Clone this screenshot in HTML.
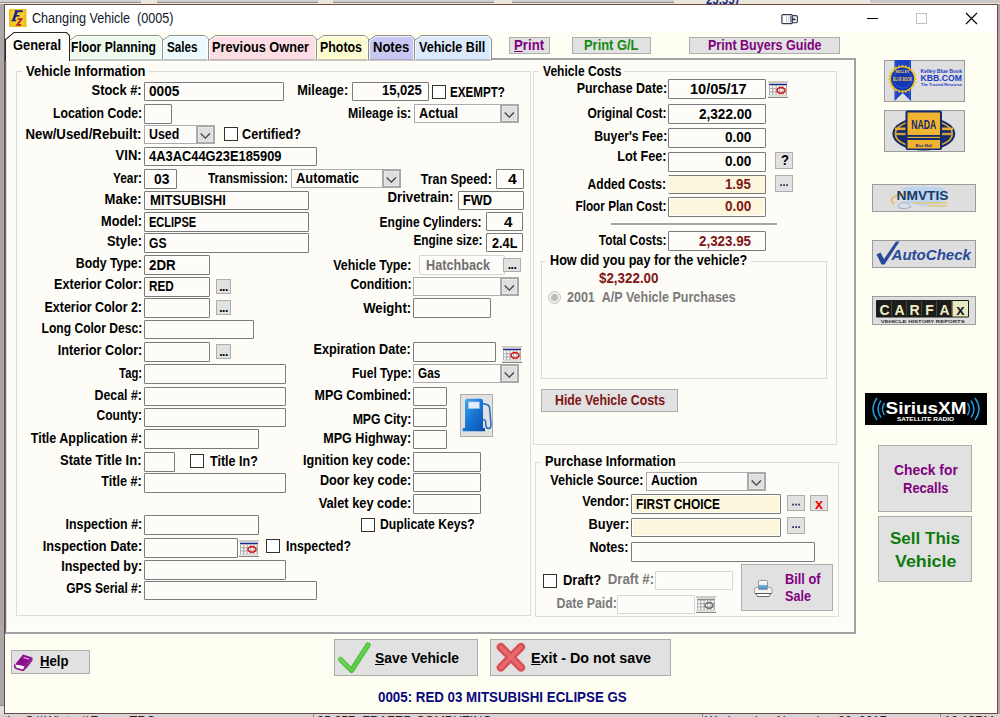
<!DOCTYPE html><html><head><meta charset="utf-8"><style>
:root{--pbg:#FDFCF7;--wbg:#FFFEF3}
html,body{margin:0;padding:0;width:1000px;height:717px;overflow:hidden;background:#A8A8A8;font-family:"Liberation Sans",sans-serif}
.t{position:absolute;white-space:nowrap;line-height:1;}
.b{position:absolute}
.inp{position:absolute;border:1px solid #7A7A7A;border-radius:1px}
.combo{position:absolute;box-sizing:border-box;border:1px solid #ABABAB;background:#FDFCF8;box-shadow:inset 0 0 0 1px #fff}
.cbtn{position:absolute;box-sizing:border-box;background:#DEDEDE;border:2px solid #A9A9A9;box-shadow:inset 0 0 0 1px #E9E9E9}
.chk{position:absolute;border:1px solid #333;background:#FFF}
.btn{position:absolute;background:#E1E1E1;border:1px solid #ADADAD}
.grp{position:absolute;border:1px solid #DCDCDC}
u{text-decoration:underline}
</style></head><body>
<div class="b" style="left:0px;top:0px;width:1000px;height:4px;background:#E9E8DA;border:none;"></div>
<div class="b" style="left:0px;top:0px;width:141px;height:2px;background:#CFCFCF;border:none;border-bottom:1px solid #8E8E8E"></div>
<div class="b" style="left:157px;top:0px;width:161px;height:2px;background:#CFCFCF;border:none;border-bottom:1px solid #8E8E8E"></div>
<div class="b" style="left:333px;top:0px;width:161px;height:2px;background:#CFCFCF;border:none;border-bottom:1px solid #8E8E8E"></div>
<div class="b" style="left:512px;top:0px;width:162px;height:2px;background:#CFCFCF;border:none;border-bottom:1px solid #8E8E8E"></div>
<div class="b" style="left:870px;top:0px;width:130px;height:3px;background:#C8C8C8;border:none;"></div>
<div class="t" style="left:706px;top:-6px;font-size:12.5px;color:#1A2A8A;font-weight:bold;transform:scaleX(0.910);transform-origin:left;">25,557</div>
<div class="b" style="left:4px;top:4px;width:992px;height:708px;border:1px solid #74483E;background:var(--wbg);box-shadow:inset 0 0 0 1px #fff"></div>
<div class="b" style="left:5px;top:5px;width:992px;height:27px;background:#FFFFFF;border:none;"></div>
<svg class="b" style="left:9px;top:9px" width="18" height="18" viewBox="0 0 18 18">
<rect x="0" y="0" width="17.5" height="18" fill="#F2C011"/>
<rect x="2" y="1.5" width="13" height="15" fill="#F8D84A" opacity="0.5"/>
<g stroke="#1A2490" stroke-linecap="butt" fill="none">
<path d="M4.3 11.6 L7.6 2.3" stroke-width="2.6"/>
<path d="M5.8 2.2 H13.8" stroke-width="2"/>
<path d="M5.6 6.8 H10.4" stroke-width="1.6"/>
<path d="M2.4 11.6 H7.2" stroke-width="1.4"/>
</g>
<g stroke="#B01830" fill="none">
<path d="M8.6 10 H12.6 L8.2 15.8 H12.2" stroke-width="1.7"/>
</g>
</svg>
<div class="t" style="left:31.5px;top:11px;font-size:14px;color:#101828;font-weight:normal;transform:scaleX(0.900);transform-origin:left;">Changing Vehicle&nbsp;&nbsp;(0005)</div>
<svg class="b" style="left:781px;top:14px" width="18" height="11" viewBox="0 0 18 11">
<rect x="9.6" y="1.6" width="6.8" height="7.2" rx="1.2" fill="#EEEEF2" stroke="#353A50" stroke-width="1.1"/>
<rect x="0.9" y="0.6" width="10.4" height="9" rx="1" fill="#FFFFFF" stroke="#353A50" stroke-width="1.2"/>
<path d="M5.5 2 V8.4 M7.8 2 V8.4" stroke="#B8BAC8" stroke-width="0.8"/>
<path d="M9.9 2 V8.4" stroke="#353A50" stroke-width="1"/>
<ellipse cx="13" cy="5.3" rx="1.7" ry="0.9" fill="#1A1E3A"/>
</svg>
<div class="b" style="left:867px;top:18px;width:11px;height:1px;background:#000;border:none;"></div>
<div class="b" style="left:916px;top:13px;width:11px;height:11px;background:transparent;border:1px solid #C0C0C0;box-sizing:border-box"></div>
<svg class="b" style="left:965px;top:12px" width="13" height="13"><path d="M1 1L12 12M12 1L1 12" stroke="#000" stroke-width="1.1"/></svg>
<div class="b" style="left:5px;top:57px;width:852px;height:1px;background:#FFFFFF;border:none;"></div>
<div class="b" style="left:856px;top:57px;width:1px;height:578px;background:#FFFFFF;border:none;"></div>
<div class="b" style="left:5px;top:634px;width:852px;height:1px;background:#FFFFFF;border:none;"></div>
<div class="b" style="left:5px;top:58px;width:851px;height:576px;box-sizing:border-box;background:var(--pbg);border-top:2px solid #A2A2A2;border-right:2px solid #A2A2A2;border-bottom:2px solid #A2A2A2;border-left:1px solid #7F6A64"></div>
<div class="b" style="left:6px;top:60px;width:1px;height:572px;background:#D6D6D6;border:none;"></div>
<div class="b" style="left:7px;top:60px;width:1px;height:572px;background:#FFFFFF;border:none;"></div>
<div class="b" style="left:6px;top:60px;width:848px;height:1px;background:#FFFFFF;border:none;"></div>
<div class="b" style="left:853px;top:60px;width:1px;height:572px;background:#FFFFFF;border:none;"></div>
<div class="b" style="left:6px;top:631px;width:848px;height:1px;background:#FFFFFF;border:none;"></div>
<svg class="b" style="left:0;top:30px" width="500" height="31" viewBox="0 30 500 31"><path d="M69.5 60 V40.5 L76.5 35.5 H159 L162.5 39 V60 Z" fill="#EEFAEE" stroke="#8E8E8E" stroke-width="1"/><path d="M70.5 60 V41 L76.8 36.5 H158.6 L161.5 39.4 V60" fill="none" stroke="#FFFFFF" stroke-width="1" opacity="0.8"/><path d="M162.5 60 V40.5 L169.5 35.5 H205 L208.5 39 V60 Z" fill="#ECF9FD" stroke="#8E8E8E" stroke-width="1"/><path d="M163.5 60 V41 L169.8 36.5 H204.6 L207.5 39.4 V60" fill="none" stroke="#FFFFFF" stroke-width="1" opacity="0.8"/><path d="M208.5 60 V40.5 L215.5 35.5 H313 L316.5 39 V60 Z" fill="#FCDDE3" stroke="#8E8E8E" stroke-width="1"/><path d="M209.5 60 V41 L215.8 36.5 H312.6 L315.5 39.4 V60" fill="none" stroke="#FFFFFF" stroke-width="1" opacity="0.8"/><path d="M316.5 60 V40.5 L323.5 35.5 H365 L368.5 39 V60 Z" fill="#FDFCD0" stroke="#8E8E8E" stroke-width="1"/><path d="M317.5 60 V41 L323.8 36.5 H364.6 L367.5 39.4 V60" fill="none" stroke="#FFFFFF" stroke-width="1" opacity="0.8"/><path d="M368.5 60 V40.5 L375.5 35.5 H411 L414.5 39 V60 Z" fill="#C8C6F2" stroke="#8E8E8E" stroke-width="1"/><path d="M369.5 60 V41 L375.8 36.5 H410.6 L413.5 39.4 V60" fill="none" stroke="#FFFFFF" stroke-width="1" opacity="0.8"/><path d="M414.5 60 V40.5 L421.5 35.5 H488 L491.5 39 V60 Z" fill="#DBEAFA" stroke="#8E8E8E" stroke-width="1"/><path d="M415.5 60 V41 L421.8 36.5 H487.6 L490.5 39.4 V60" fill="none" stroke="#FFFFFF" stroke-width="1" opacity="0.8"/><path d="M5.5 61 V39.5 L14 32.5 H66.5 L69.5 35.5 V61" fill="#FCFBF6" stroke="#262626" stroke-width="1.1"/><path d="M6.6 61 V40 L14.4 33.6 H66 L68.4 36 V61" fill="none" stroke="#FFFFFF" stroke-width="1"/></svg>
<div class="b" style="left:7px;top:58px;width:61px;height:3px;background:var(--pbg);border:none;"></div>
<div class="t" style="left:12.5px;top:38px;font-size:14.3px;color:#000;font-weight:bold;transform:scaleX(0.901);transform-origin:left;">General</div>
<div class="t" style="left:71px;top:40px;font-size:14.3px;color:#000;font-weight:bold;transform:scaleX(0.849);transform-origin:left;">Floor Planning</div>
<div class="t" style="left:167px;top:40px;font-size:14.3px;color:#000;font-weight:bold;transform:scaleX(0.819);transform-origin:left;">Sales</div>
<div class="t" style="left:212.4px;top:40px;font-size:14.3px;color:#000;font-weight:bold;transform:scaleX(0.891);transform-origin:left;">Previous Owner</div>
<div class="t" style="left:320px;top:40px;font-size:14.3px;color:#000;font-weight:bold;transform:scaleX(0.867);transform-origin:left;">Photos</div>
<div class="t" style="left:372.5px;top:40px;font-size:14.3px;color:#000;font-weight:bold;transform:scaleX(0.911);transform-origin:left;">Notes</div>
<div class="t" style="left:419px;top:40px;font-size:14.3px;color:#000;font-weight:bold;transform:scaleX(0.879);transform-origin:left;">Vehicle Bill</div>
<div class="btn" style="left:509px;top:37px;width:39px;height:15px;"></div>
<div class="t" style="left:514.4px;top:38px;font-size:14.3px;color:#800080;font-weight:bold;transform:scaleX(0.927);transform-origin:left;"><u>P</u>rint</div>
<div class="btn" style="left:572px;top:37px;width:77px;height:15px;"></div>
<div class="t" style="left:584px;top:38px;font-size:14.3px;color:#138A13;font-weight:bold;transform:scaleX(0.903);transform-origin:left;">Print G/L</div>
<div class="btn" style="left:689px;top:37px;width:149px;height:15px;"></div>
<div class="t" style="left:708px;top:38px;font-size:14.3px;color:#800080;font-weight:bold;transform:scaleX(0.877);transform-origin:left;">Print Buyers Guide</div>
<div class="grp" style="left:16px;top:71px;width:513px;height:543px"></div>
<div class="b" style="left:21.5px;top:69px;width:126.5px;height:5px;background:var(--pbg);border:none;"></div>
<div class="t" style="left:25.5px;top:64px;font-size:14.3px;color:#000;font-weight:bold;transform:scaleX(0.906);transform-origin:left;">Vehicle Information</div>
<div class="t" style="right:858px;top:83px;font-size:14.3px;color:#000;font-weight:bold;transform:scaleX(0.899);transform-origin:right;">Stock #:</div>
<div class="t" style="right:858px;top:106px;font-size:14.3px;color:#000;font-weight:bold;transform:scaleX(0.855);transform-origin:right;">Location Code:</div>
<div class="t" style="right:858px;top:127px;font-size:14.3px;color:#000;font-weight:bold;transform:scaleX(0.924);transform-origin:right;">New/Used/Rebuilt:</div>
<div class="t" style="right:858px;top:148px;font-size:14.3px;color:#000;font-weight:bold;transform:scaleX(0.909);transform-origin:right;">VIN:</div>
<div class="t" style="right:858px;top:171px;font-size:14.3px;color:#000;font-weight:bold;transform:scaleX(0.829);transform-origin:right;">Year:</div>
<div class="t" style="right:858px;top:192px;font-size:14.3px;color:#000;font-weight:bold;transform:scaleX(0.913);transform-origin:right;">Make:</div>
<div class="t" style="right:858px;top:214px;font-size:14.3px;color:#000;font-weight:bold;transform:scaleX(0.890);transform-origin:right;">Model:</div>
<div class="t" style="right:858px;top:234px;font-size:14.3px;color:#000;font-weight:bold;transform:scaleX(0.899);transform-origin:right;">Style:</div>
<div class="t" style="right:858px;top:256px;font-size:14.3px;color:#000;font-weight:bold;transform:scaleX(0.859);transform-origin:right;">Body Type:</div>
<div class="t" style="right:858px;top:277px;font-size:14.3px;color:#000;font-weight:bold;transform:scaleX(0.879);transform-origin:right;">Exterior Color:</div>
<div class="t" style="right:858px;top:300px;font-size:14.3px;color:#000;font-weight:bold;transform:scaleX(0.870);transform-origin:right;">Exterior Color 2:</div>
<div class="t" style="right:858px;top:321px;font-size:14.3px;color:#000;font-weight:bold;transform:scaleX(0.844);transform-origin:right;">Long Color Desc:</div>
<div class="t" style="right:858px;top:343px;font-size:14.3px;color:#000;font-weight:bold;transform:scaleX(0.887);transform-origin:right;">Interior Color:</div>
<div class="t" style="right:858px;top:366px;font-size:14.3px;color:#000;font-weight:bold;transform:scaleX(0.790);transform-origin:right;">Tag:</div>
<div class="t" style="right:858px;top:388px;font-size:14.3px;color:#000;font-weight:bold;transform:scaleX(0.862);transform-origin:right;">Decal #:</div>
<div class="t" style="right:858px;top:408px;font-size:14.3px;color:#000;font-weight:bold;transform:scaleX(0.841);transform-origin:right;">County:</div>
<div class="t" style="right:858px;top:431px;font-size:14.3px;color:#000;font-weight:bold;transform:scaleX(0.876);transform-origin:right;">Title Application #:</div>
<div class="t" style="right:858px;top:453px;font-size:14.3px;color:#000;font-weight:bold;transform:scaleX(0.910);transform-origin:right;">State Title In:</div>
<div class="t" style="right:858px;top:474px;font-size:14.3px;color:#000;font-weight:bold;transform:scaleX(0.884);transform-origin:right;">Title #:</div>
<div class="t" style="right:858px;top:517px;font-size:14.3px;color:#000;font-weight:bold;transform:scaleX(0.869);transform-origin:right;">Inspection #:</div>
<div class="t" style="right:858px;top:539px;font-size:14.3px;color:#000;font-weight:bold;transform:scaleX(0.895);transform-origin:right;">Inspection Date:</div>
<div class="t" style="right:858px;top:559px;font-size:14.3px;color:#000;font-weight:bold;transform:scaleX(0.879);transform-origin:right;">Inspected by:</div>
<div class="t" style="right:858px;top:581px;font-size:14.3px;color:#000;font-weight:bold;transform:scaleX(0.842);transform-origin:right;">GPS Serial #:</div>
<div class="inp" style="left:144px;top:82px;width:138px;height:17px;border-color:#7A7A7A;background:#FDFCF8;box-shadow:inset 0 0 0 1px #FFF;"></div>
<div class="t" style="left:149px;top:84px;font-size:14.3px;color:#000;font-weight:bold;transform:scaleX(0.956);transform-origin:left;">0005</div>
<div class="inp" style="left:144px;top:104px;width:26px;height:18px;border-color:#7A7A7A;background:#FDFCF8;box-shadow:inset 0 0 0 1px #FFF;"></div>
<div class="combo" style="left:144px;top:125px;width:71px;height:19px"></div>
<div class="cbtn" style="left:196px;top:125px;width:19px;height:19px"><svg width="19" height="19" style="position:absolute;left:-2px;top:-2px"><path d="M4.7 8.5 L9.3 13.1 L13.9 8.5" stroke="#404040" stroke-width="1.3" fill="none"/></svg></div>
<div class="t" style="left:149px;top:127px;font-size:14.3px;color:#000;font-weight:bold;transform:scaleX(0.864);transform-origin:left;">Used</div>
<div class="chk" style="left:224px;top:127px;width:12px;height:12px"></div>
<div class="t" style="left:242.4px;top:127px;font-size:14.3px;color:#000;font-weight:bold;transform:scaleX(0.884);transform-origin:left;">Certified?</div>
<div class="inp" style="left:144px;top:147px;width:171px;height:17px;border-color:#7A7A7A;background:#FDFCF8;box-shadow:inset 0 0 0 1px #FFF;"></div>
<div class="t" style="left:149.4px;top:149px;font-size:14.3px;color:#000;font-weight:bold;transform:scaleX(0.901);transform-origin:left;">4A3AC44G23E185909</div>
<div class="inp" style="left:144px;top:169px;width:31px;height:18px;border-color:#7A7A7A;background:#FDFCF8;box-shadow:inset 0 0 0 1px #FFF;"></div>
<div class="t" style="left:153.6px;top:172px;font-size:14.3px;color:#000;font-weight:bold;transform:scaleX(0.968);transform-origin:left;">03</div>
<div class="inp" style="left:144px;top:191px;width:163px;height:17px;border-color:#7A7A7A;background:#FDFCF8;box-shadow:inset 0 0 0 1px #FFF;"></div>
<div class="t" style="left:149.5px;top:193px;font-size:14.3px;color:#000;font-weight:bold;transform:scaleX(0.918);transform-origin:left;">MITSUBISHI</div>
<div class="inp" style="left:144px;top:212px;width:163px;height:18px;border-color:#7A7A7A;background:#FDFCF8;box-shadow:inset 0 0 0 1px #FFF;"></div>
<div class="t" style="left:149.4px;top:215px;font-size:14.3px;color:#000;font-weight:bold;transform:scaleX(0.771);transform-origin:left;">ECLIPSE</div>
<div class="inp" style="left:144px;top:233px;width:163px;height:18px;border-color:#7A7A7A;background:#FDFCF8;box-shadow:inset 0 0 0 1px #FFF;"></div>
<div class="t" style="left:149.4px;top:236px;font-size:14.3px;color:#000;font-weight:bold;transform:scaleX(0.851);transform-origin:left;">GS</div>
<div class="inp" style="left:144px;top:255px;width:64px;height:18px;border-color:#7A7A7A;background:#FDFCF8;box-shadow:inset 0 0 0 1px #FFF;"></div>
<div class="t" style="left:149.4px;top:258px;font-size:14.3px;color:#000;font-weight:bold;transform:scaleX(0.930);transform-origin:left;">2DR</div>
<div class="inp" style="left:144px;top:277px;width:64px;height:18px;border-color:#7A7A7A;background:#FDFCF8;box-shadow:inset 0 0 0 1px #FFF;"></div>
<div class="t" style="left:149.4px;top:279px;font-size:14.3px;color:#000;font-weight:bold;transform:scaleX(0.815);transform-origin:left;">RED</div>
<div class="btn" style="left:216px;top:279px;width:13px;height:13px;"><div style="position:absolute;left:0;right:0;bottom:2px;text-align:center;font-size:12px;font-weight:bold;line-height:8px;letter-spacing:-0.5px">...</div></div>
<div class="inp" style="left:144px;top:298px;width:64px;height:18px;border-color:#7A7A7A;background:#FDFCF8;box-shadow:inset 0 0 0 1px #FFF;"></div>
<div class="btn" style="left:216px;top:300px;width:13px;height:13px;"><div style="position:absolute;left:0;right:0;bottom:2px;text-align:center;font-size:12px;font-weight:bold;line-height:8px;letter-spacing:-0.5px">...</div></div>
<div class="inp" style="left:144px;top:320px;width:108px;height:17px;border-color:#7A7A7A;background:#FDFCF8;box-shadow:inset 0 0 0 1px #FFF;"></div>
<div class="inp" style="left:144px;top:342px;width:64px;height:18px;border-color:#7A7A7A;background:#FDFCF8;box-shadow:inset 0 0 0 1px #FFF;"></div>
<div class="btn" style="left:216px;top:344px;width:13px;height:13px;"><div style="position:absolute;left:0;right:0;bottom:2px;text-align:center;font-size:12px;font-weight:bold;line-height:8px;letter-spacing:-0.5px">...</div></div>
<div class="inp" style="left:144px;top:364px;width:140px;height:18px;border-color:#7A7A7A;background:#FDFCF8;box-shadow:inset 0 0 0 1px #FFF;"></div>
<div class="inp" style="left:144px;top:387px;width:140px;height:17px;border-color:#7A7A7A;background:#FDFCF8;box-shadow:inset 0 0 0 1px #FFF;"></div>
<div class="inp" style="left:144px;top:408px;width:140px;height:17px;border-color:#7A7A7A;background:#FDFCF8;box-shadow:inset 0 0 0 1px #FFF;"></div>
<div class="inp" style="left:144px;top:429px;width:113px;height:18px;border-color:#7A7A7A;background:#FDFCF8;box-shadow:inset 0 0 0 1px #FFF;"></div>
<div class="inp" style="left:144px;top:452px;width:29px;height:18px;border-color:#7A7A7A;background:#FDFCF8;box-shadow:inset 0 0 0 1px #FFF;"></div>
<div class="chk" style="left:190px;top:454px;width:12px;height:12px"></div>
<div class="t" style="left:209.6px;top:454px;font-size:14.3px;color:#000;font-weight:bold;transform:scaleX(0.876);transform-origin:left;">Title In?</div>
<div class="inp" style="left:144px;top:473px;width:140px;height:18px;border-color:#7A7A7A;background:#FDFCF8;box-shadow:inset 0 0 0 1px #FFF;"></div>
<div class="inp" style="left:144px;top:515px;width:113px;height:18px;border-color:#7A7A7A;background:#FDFCF8;box-shadow:inset 0 0 0 1px #FFF;"></div>
<div class="inp" style="left:144px;top:538px;width:92px;height:18px;border-color:#7A7A7A;background:#FDFCF8;box-shadow:inset 0 0 0 1px #FFF;"></div>
<svg class="b" style="left:239px;top:540px" width="20" height="18" viewBox="0 0 20 18"><rect x="0" y="0.5" width="20" height="1" fill="#A29C92"/><rect x="1" y="2.7" width="18" height="1.6" fill="#1A2A90"/><rect x="1" y="4.4" width="18" height="10" fill="#ABABAB"/><rect x="1.9" y="4.9" width="2.2" height="2.2" fill="#FFFFFF"/><rect x="1.9" y="8.2" width="2.2" height="2.2" fill="#FFFFFF"/><rect x="1.9" y="11.5" width="2.2" height="2.2" fill="#FFFFFF"/><rect x="5.3" y="4.9" width="2.2" height="2.2" fill="#FFFFFF"/><rect x="5.3" y="8.2" width="2.2" height="2.2" fill="#FFFFFF"/><rect x="5.3" y="11.5" width="2.2" height="2.2" fill="#FFFFFF"/><rect x="8.7" y="4.9" width="2.2" height="2.2" fill="#FFFFFF"/><rect x="8.7" y="8.2" width="2.2" height="2.2" fill="#FFFFFF"/><rect x="8.7" y="11.5" width="2.2" height="2.2" fill="#FFFFFF"/><rect x="12.1" y="4.9" width="2.2" height="2.2" fill="#FFFFFF"/><rect x="12.1" y="8.2" width="2.2" height="2.2" fill="#FFFFFF"/><rect x="12.1" y="11.5" width="2.2" height="2.2" fill="#FFFFFF"/><rect x="15.5" y="4.9" width="2.2" height="2.2" fill="#FFFFFF"/><rect x="15.5" y="8.2" width="2.2" height="2.2" fill="#FFFFFF"/><rect x="15.5" y="11.5" width="2.2" height="2.2" fill="#FFFFFF"/><ellipse cx="13" cy="9.3" rx="4" ry="2.9" fill="none" stroke="#E01010" stroke-width="1.5"/><rect x="0" y="15.8" width="20" height="1.1" fill="#7A7A7A"/></svg>
<div class="chk" style="left:266px;top:539px;width:12px;height:12px"></div>
<div class="t" style="left:285.6px;top:539px;font-size:14.3px;color:#000;font-weight:bold;transform:scaleX(0.861);transform-origin:left;">Inspected?</div>
<div class="inp" style="left:144px;top:560px;width:140px;height:18px;border-color:#7A7A7A;background:#FDFCF8;box-shadow:inset 0 0 0 1px #FFF;"></div>
<div class="inp" style="left:144px;top:581px;width:171px;height:17px;border-color:#7A7A7A;background:#FDFCF8;box-shadow:inset 0 0 0 1px #FFF;"></div>
<div class="t" style="right:652px;top:83px;font-size:14.3px;color:#000;font-weight:bold;transform:scaleX(0.892);transform-origin:right;">Mileage:</div>
<div class="inp" style="left:352px;top:82px;width:75px;height:17px;border-color:#7A7A7A;background:#FDFCF8;box-shadow:inset 0 0 0 1px #FFF;"></div>
<div class="t" style="left:381.7px;top:83px;font-size:14.3px;color:#000;font-weight:bold;transform:scaleX(0.910);transform-origin:left;">15,025</div>
<div class="chk" style="left:432px;top:85px;width:12px;height:12px"></div>
<div class="t" style="left:450.4px;top:85px;font-size:14.3px;color:#000;font-weight:bold;transform:scaleX(0.814);transform-origin:left;">EXEMPT?</div>
<div class="t" style="right:589px;top:106px;font-size:14.3px;color:#000;font-weight:bold;transform:scaleX(0.862);transform-origin:right;">Mileage is:</div>
<div class="combo" style="left:414px;top:104px;width:105px;height:19px"></div>
<div class="cbtn" style="left:500px;top:104px;width:19px;height:19px"><svg width="19" height="19" style="position:absolute;left:-2px;top:-2px"><path d="M4.7 8.5 L9.3 13.1 L13.9 8.5" stroke="#404040" stroke-width="1.3" fill="none"/></svg></div>
<div class="t" style="left:419px;top:106px;font-size:14.3px;color:#000;font-weight:bold;transform:scaleX(0.892);transform-origin:left;">Actual</div>
<div class="t" style="right:712px;top:171px;font-size:14.3px;color:#000;font-weight:bold;transform:scaleX(0.825);transform-origin:right;">Transmission:</div>
<div class="combo" style="left:291px;top:169px;width:110px;height:19px"></div>
<div class="cbtn" style="left:382px;top:169px;width:19px;height:19px"><svg width="19" height="19" style="position:absolute;left:-2px;top:-2px"><path d="M4.7 8.5 L9.3 13.1 L13.9 8.5" stroke="#404040" stroke-width="1.3" fill="none"/></svg></div>
<div class="t" style="left:296px;top:171px;font-size:14.3px;color:#000;font-weight:bold;transform:scaleX(0.901);transform-origin:left;">Automatic</div>
<div class="t" style="right:508px;top:172px;font-size:14.3px;color:#000;font-weight:bold;transform:scaleX(0.868);transform-origin:right;">Tran Speed:</div>
<div class="inp" style="left:496px;top:169px;width:26px;height:18px;border-color:#7A7A7A;background:#FDFCF8;box-shadow:inset 0 0 0 1px #FFF;"></div>
<div class="t" style="left:508.3px;top:172px;font-size:14.3px;color:#000;font-weight:bold;transform:scaleX(1.106);transform-origin:left;">4</div>
<div class="t" style="right:546px;top:190px;font-size:14.3px;color:#000;font-weight:bold;transform:scaleX(0.923);transform-origin:right;">Drivetrain:</div>
<div class="inp" style="left:458px;top:191px;width:64px;height:17px;border-color:#7A7A7A;background:#FDFCF8;box-shadow:inset 0 0 0 1px #FFF;"></div>
<div class="t" style="left:463.4px;top:193px;font-size:14.3px;color:#000;font-weight:bold;transform:scaleX(0.891);transform-origin:left;">FWD</div>
<div class="t" style="right:518px;top:215px;font-size:14.3px;color:#000;font-weight:bold;transform:scaleX(0.839);transform-origin:right;">Engine Cylinders:</div>
<div class="inp" style="left:486px;top:212px;width:35px;height:17px;border-color:#7A7A7A;background:#FDFCF8;box-shadow:inset 0 0 0 1px #FFF;"></div>
<div class="t" style="left:503.5px;top:215px;font-size:14.3px;color:#000;font-weight:bold;transform:scaleX(1.056);transform-origin:left;">4</div>
<div class="t" style="right:518px;top:233px;font-size:14.3px;color:#000;font-weight:bold;transform:scaleX(0.827);transform-origin:right;">Engine size:</div>
<div class="inp" style="left:486px;top:233px;width:35px;height:17px;border-color:#7A7A7A;background:#FDFCF8;box-shadow:inset 0 0 0 1px #FFF;"></div>
<div class="t" style="left:491.7px;top:236px;font-size:14.3px;color:#000;font-weight:bold;transform:scaleX(0.888);transform-origin:left;">2.4L</div>
<div class="t" style="right:589px;top:258px;font-size:14.3px;color:#000;font-weight:bold;transform:scaleX(0.864);transform-origin:right;">Vehicle Type:</div>
<div class="inp" style="left:419px;top:255px;width:84px;height:18px;border-color:#D4D4D4;background:#FDFCF8;box-shadow:inset 0 0 0 1px #FFFFFF;"></div>
<div class="t" style="left:425.8px;top:258px;font-size:14.3px;color:#6E6E6E;font-weight:bold;transform:scaleX(0.885);transform-origin:left;">Hatchback</div>
<div class="btn" style="left:503px;top:258px;width:16px;height:12px;"><div style="position:absolute;left:0;right:0;bottom:2px;text-align:center;font-size:12px;font-weight:bold;line-height:8px;letter-spacing:-0.5px">...</div></div>
<div class="t" style="right:589px;top:277px;font-size:14.3px;color:#000;font-weight:bold;transform:scaleX(0.854);transform-origin:right;">Condition:</div>
<div class="combo" style="left:413px;top:277px;width:106px;height:19px"></div>
<div class="cbtn" style="left:500px;top:277px;width:19px;height:19px"><svg width="19" height="19" style="position:absolute;left:-2px;top:-2px"><path d="M4.7 8.5 L9.3 13.1 L13.9 8.5" stroke="#404040" stroke-width="1.3" fill="none"/></svg></div>
<div class="t" style="right:589px;top:301px;font-size:14.3px;color:#000;font-weight:bold;transform:scaleX(0.920);transform-origin:right;">Weight:</div>
<div class="inp" style="left:413px;top:298px;width:76px;height:18px;border-color:#7A7A7A;background:#FDFCF8;box-shadow:inset 0 0 0 1px #FFF;"></div>
<div class="t" style="right:589px;top:342px;font-size:14.3px;color:#000;font-weight:bold;transform:scaleX(0.885);transform-origin:right;">Expiration Date:</div>
<div class="inp" style="left:413px;top:342px;width:81px;height:18px;border-color:#7A7A7A;background:#FDFCF8;box-shadow:inset 0 0 0 1px #FFF;"></div>
<svg class="b" style="left:502px;top:346px" width="20" height="18" viewBox="0 0 20 18"><rect x="0" y="0.5" width="20" height="1" fill="#A29C92"/><rect x="1" y="2.7" width="18" height="1.6" fill="#1A2A90"/><rect x="1" y="4.4" width="18" height="10" fill="#ABABAB"/><rect x="1.9" y="4.9" width="2.2" height="2.2" fill="#FFFFFF"/><rect x="1.9" y="8.2" width="2.2" height="2.2" fill="#FFFFFF"/><rect x="1.9" y="11.5" width="2.2" height="2.2" fill="#FFFFFF"/><rect x="5.3" y="4.9" width="2.2" height="2.2" fill="#FFFFFF"/><rect x="5.3" y="8.2" width="2.2" height="2.2" fill="#FFFFFF"/><rect x="5.3" y="11.5" width="2.2" height="2.2" fill="#FFFFFF"/><rect x="8.7" y="4.9" width="2.2" height="2.2" fill="#FFFFFF"/><rect x="8.7" y="8.2" width="2.2" height="2.2" fill="#FFFFFF"/><rect x="8.7" y="11.5" width="2.2" height="2.2" fill="#FFFFFF"/><rect x="12.1" y="4.9" width="2.2" height="2.2" fill="#FFFFFF"/><rect x="12.1" y="8.2" width="2.2" height="2.2" fill="#FFFFFF"/><rect x="12.1" y="11.5" width="2.2" height="2.2" fill="#FFFFFF"/><rect x="15.5" y="4.9" width="2.2" height="2.2" fill="#FFFFFF"/><rect x="15.5" y="8.2" width="2.2" height="2.2" fill="#FFFFFF"/><rect x="15.5" y="11.5" width="2.2" height="2.2" fill="#FFFFFF"/><ellipse cx="13" cy="9.3" rx="4" ry="2.9" fill="none" stroke="#E01010" stroke-width="1.5"/><rect x="0" y="15.8" width="20" height="1.1" fill="#7A7A7A"/></svg>
<div class="t" style="right:589px;top:366px;font-size:14.3px;color:#000;font-weight:bold;transform:scaleX(0.845);transform-origin:right;">Fuel Type:</div>
<div class="combo" style="left:413px;top:364px;width:106px;height:19px"></div>
<div class="cbtn" style="left:500px;top:364px;width:19px;height:19px"><svg width="19" height="19" style="position:absolute;left:-2px;top:-2px"><path d="M4.7 8.5 L9.3 13.1 L13.9 8.5" stroke="#404040" stroke-width="1.3" fill="none"/></svg></div>
<div class="t" style="left:418px;top:366px;font-size:14.3px;color:#000;font-weight:bold;transform:scaleX(0.821);transform-origin:left;">Gas</div>
<div class="t" style="right:589px;top:388px;font-size:14.3px;color:#000;font-weight:bold;transform:scaleX(0.869);transform-origin:right;">MPG Combined:</div>
<div class="inp" style="left:413px;top:387px;width:32px;height:17px;border-color:#7A7A7A;background:#FDFCF8;box-shadow:inset 0 0 0 1px #FFF;"></div>
<div class="t" style="right:589px;top:412px;font-size:14.3px;color:#000;font-weight:bold;transform:scaleX(0.859);transform-origin:right;">MPG City:</div>
<div class="inp" style="left:413px;top:408px;width:32px;height:17px;border-color:#7A7A7A;background:#FDFCF8;box-shadow:inset 0 0 0 1px #FFF;"></div>
<div class="t" style="right:589px;top:431px;font-size:14.3px;color:#000;font-weight:bold;transform:scaleX(0.877);transform-origin:right;">MPG Highway:</div>
<div class="inp" style="left:413px;top:430px;width:32px;height:17px;border-color:#7A7A7A;background:#FDFCF8;box-shadow:inset 0 0 0 1px #FFF;"></div>
<div class="t" style="right:589px;top:453px;font-size:14.3px;color:#000;font-weight:bold;transform:scaleX(0.885);transform-origin:right;">Ignition key code:</div>
<div class="inp" style="left:413px;top:452px;width:66px;height:18px;border-color:#7A7A7A;background:#FDFCF8;box-shadow:inset 0 0 0 1px #FFF;"></div>
<div class="t" style="right:589px;top:473px;font-size:14.3px;color:#000;font-weight:bold;transform:scaleX(0.884);transform-origin:right;">Door key code:</div>
<div class="inp" style="left:413px;top:473px;width:66px;height:17px;border-color:#7A7A7A;background:#FDFCF8;box-shadow:inset 0 0 0 1px #FFF;"></div>
<div class="t" style="right:589px;top:496px;font-size:14.3px;color:#000;font-weight:bold;transform:scaleX(0.897);transform-origin:right;">Valet key code:</div>
<div class="inp" style="left:413px;top:494px;width:66px;height:18px;border-color:#7A7A7A;background:#FDFCF8;box-shadow:inset 0 0 0 1px #FFF;"></div>
<div class="chk" style="left:361px;top:518px;width:12px;height:12px"></div>
<div class="t" style="left:380px;top:517px;font-size:14.3px;color:#000;font-weight:bold;transform:scaleX(0.851);transform-origin:left;">Duplicate Keys?</div>
<div class="btn" style="left:460px;top:394px;width:31px;height:41px;"></div>
<svg class="b" style="left:460px;top:394px" width="34" height="43" viewBox="460 394 34 43">
<defs><linearGradient id="gp" x1="0" y1="0" x2="1" y2="1"><stop offset="0" stop-color="#4DB0F2"/><stop offset="0.45" stop-color="#1A7AD8"/><stop offset="1" stop-color="#0A4EA8"/></linearGradient></defs>
<path d="M465 401 Q465 398.7 467.5 398.7 H480.5 Q483 398.7 483 401 V428 H485 V431.3 H462.7 V428 H465 Z" fill="url(#gp)"/>
<rect x="468.3" y="401.9" width="11" height="6.6" fill="#E4EEF8" stroke="#9CC4EC" stroke-width="0.6"/>
<path d="M483 403.5 L488 405 L489.5 407 L491 425 Q491 428.5 488.5 428.5 Q486 428.5 485.8 425 L485.5 421 Q485 419.5 483 419.5" fill="none" stroke="#1A6CC8" stroke-width="1.5"/>
</svg>
<div class="grp" style="left:533px;top:71px;width:302px;height:372px"></div>
<div class="b" style="left:538.6px;top:69px;width:85.5px;height:5px;background:var(--pbg);border:none;"></div>
<div class="t" style="left:542.6px;top:64px;font-size:14.3px;color:#000;font-weight:bold;transform:scaleX(0.844);transform-origin:left;">Vehicle Costs</div>
<div class="t" style="right:333px;top:81px;font-size:14.3px;color:#000;font-weight:bold;transform:scaleX(0.868);transform-origin:right;">Purchase Date:</div>
<div class="inp" style="left:668px;top:79px;width:96px;height:18px;border-color:#7A7A7A;background:#FDFCF8;box-shadow:inset 0 0 0 1px #FFF;"></div>
<div class="t" style="left:689.7px;top:82px;font-size:14.3px;color:#000;font-weight:bold;transform:scaleX(1.019);transform-origin:left;">10/05/17</div>
<svg class="b" style="left:768px;top:81px" width="20" height="18" viewBox="0 0 20 18"><rect x="0" y="0.5" width="20" height="1" fill="#A29C92"/><rect x="1" y="2.7" width="18" height="1.6" fill="#1A2A90"/><rect x="1" y="4.4" width="18" height="10" fill="#ABABAB"/><rect x="1.9" y="4.9" width="2.2" height="2.2" fill="#FFFFFF"/><rect x="1.9" y="8.2" width="2.2" height="2.2" fill="#FFFFFF"/><rect x="1.9" y="11.5" width="2.2" height="2.2" fill="#FFFFFF"/><rect x="5.3" y="4.9" width="2.2" height="2.2" fill="#FFFFFF"/><rect x="5.3" y="8.2" width="2.2" height="2.2" fill="#FFFFFF"/><rect x="5.3" y="11.5" width="2.2" height="2.2" fill="#FFFFFF"/><rect x="8.7" y="4.9" width="2.2" height="2.2" fill="#FFFFFF"/><rect x="8.7" y="8.2" width="2.2" height="2.2" fill="#FFFFFF"/><rect x="8.7" y="11.5" width="2.2" height="2.2" fill="#FFFFFF"/><rect x="12.1" y="4.9" width="2.2" height="2.2" fill="#FFFFFF"/><rect x="12.1" y="8.2" width="2.2" height="2.2" fill="#FFFFFF"/><rect x="12.1" y="11.5" width="2.2" height="2.2" fill="#FFFFFF"/><rect x="15.5" y="4.9" width="2.2" height="2.2" fill="#FFFFFF"/><rect x="15.5" y="8.2" width="2.2" height="2.2" fill="#FFFFFF"/><rect x="15.5" y="11.5" width="2.2" height="2.2" fill="#FFFFFF"/><ellipse cx="13" cy="9.3" rx="4" ry="2.9" fill="none" stroke="#E01010" stroke-width="1.5"/><rect x="0" y="15.8" width="20" height="1.1" fill="#7A7A7A"/></svg>
<div class="t" style="right:333px;top:106px;font-size:14.3px;color:#000;font-weight:bold;transform:scaleX(0.836);transform-origin:right;">Original Cost:</div>
<div class="inp" style="left:668px;top:104px;width:96px;height:18px;border-color:#7A7A7A;background:#FDFCF8;box-shadow:inset 0 0 0 1px #FFF;"></div>
<div class="t" style="left:699px;top:107px;font-size:14.3px;color:#000;font-weight:bold;transform:scaleX(0.949);transform-origin:left;">2,322.00</div>
<div class="t" style="right:333px;top:129px;font-size:14.3px;color:#000;font-weight:bold;transform:scaleX(0.856);transform-origin:right;">Buyer's Fee:</div>
<div class="inp" style="left:668px;top:128px;width:96px;height:18px;border-color:#7A7A7A;background:#FDFCF8;box-shadow:inset 0 0 0 1px #FFF;"></div>
<div class="t" style="left:725.4px;top:130px;font-size:14.3px;color:#000;font-weight:bold;transform:scaleX(0.949);transform-origin:left;">0.00</div>
<div class="t" style="right:333px;top:149px;font-size:14.3px;color:#000;font-weight:bold;transform:scaleX(0.888);transform-origin:right;">Lot Fee:</div>
<div class="inp" style="left:668px;top:152px;width:96px;height:18px;border-color:#7A7A7A;background:#FDFCF8;box-shadow:inset 0 0 0 1px #FFF;"></div>
<div class="t" style="left:725.4px;top:154px;font-size:14.3px;color:#000;font-weight:bold;transform:scaleX(0.949);transform-origin:left;">0.00</div>
<div class="btn" style="left:775px;top:152px;width:16px;height:15px;"></div>
<div class="t" style="left:780.5px;top:153px;font-size:14.3px;color:#000;font-weight:bold;transform:scaleX(0.916);transform-origin:left;">?</div>
<div class="t" style="right:334px;top:177px;font-size:14.3px;color:#000;font-weight:bold;transform:scaleX(0.843);transform-origin:right;">Added Costs:</div>
<div class="inp" style="left:668px;top:175px;width:96px;height:17px;border-color:#7A7A7A;background:#FCF7DC;box-shadow:inset 0 0 0 1px #FFF;border-left-color:transparent;box-shadow:none"></div>
<div class="t" style="left:725.4px;top:177px;font-size:14.3px;color:#7E1515;font-weight:bold;transform:scaleX(0.927);transform-origin:left;">1.95</div>
<div class="btn" style="left:775px;top:175px;width:16px;height:15px;"></div>
<svg class="b" style="left:775px;top:175px" width="19" height="18" viewBox="775 175 19 18"><g fill="#1C2A58"><rect x="780.3" y="184.2" width="1.6" height="1.8"/><rect x="783.3" y="184.2" width="1.6" height="1.8"/><rect x="786.3" y="184.2" width="1.6" height="1.8"/></g></svg>
<div class="t" style="right:334px;top:199px;font-size:14.3px;color:#000;font-weight:bold;transform:scaleX(0.824);transform-origin:right;">Floor Plan Cost:</div>
<div class="inp" style="left:668px;top:197px;width:96px;height:18px;border-color:#7A7A7A;background:#FCF7DC;box-shadow:inset 0 0 0 1px #FFF;"></div>
<div class="t" style="left:725.4px;top:199px;font-size:14.3px;color:#7E1515;font-weight:bold;transform:scaleX(0.949);transform-origin:left;">0.00</div>
<div class="b" style="left:611px;top:223px;width:166px;height:2px;background:#A6A6A6;border:none;"></div>
<div class="t" style="right:333px;top:233px;font-size:14.3px;color:#000;font-weight:bold;transform:scaleX(0.831);transform-origin:right;">Total Costs:</div>
<div class="inp" style="left:668px;top:231px;width:96px;height:18px;border-color:#7A7A7A;background:#FDFCF8;box-shadow:inset 0 0 0 1px #FFF;"></div>
<div class="t" style="left:699.1px;top:234px;font-size:14.3px;color:#7E1515;font-weight:bold;transform:scaleX(0.934);transform-origin:left;">2,323.95</div>
<div class="grp" style="left:541px;top:261px;width:284px;height:116px"></div>
<div class="b" style="left:546.4px;top:259px;width:204.30000000000007px;height:5px;background:var(--pbg);border:none;"></div>
<div class="t" style="left:550.4px;top:253px;font-size:14.3px;color:#000;font-weight:bold;transform:scaleX(0.884);transform-origin:left;">How did you pay for the vehicle?</div>
<div class="t" style="left:598.5px;top:271px;font-size:14.3px;color:#7E1515;font-weight:bold;transform:scaleX(0.935);transform-origin:left;">$2,322.00</div>
<div class="b" style="left:548px;top:291px;width:13px;height:13px;box-sizing:border-box;border-radius:50%;border:1px solid #C4C4C4;background:#EFEFEF"></div>
<div class="b" style="left:551px;top:294px;width:7px;height:7px;border-radius:50%;background:#BDBDBD"></div>
<div class="t" style="left:566.8px;top:290px;font-size:14.3px;color:#7A7A7A;font-weight:bold;transform:scaleX(0.875);transform-origin:left;">2001&nbsp;&nbsp;A/P Vehicle Purchases</div>
<div class="btn" style="left:541px;top:389px;width:135px;height:21px;"></div>
<div class="t" style="left:554.6px;top:393px;font-size:14.3px;color:#7E1515;font-weight:bold;transform:scaleX(0.860);transform-origin:left;">Hide Vehicle Costs</div>
<div class="grp" style="left:535px;top:462px;width:302px;height:153px"></div>
<div class="b" style="left:540.9px;top:460px;width:137.60000000000002px;height:5px;background:var(--pbg);border:none;"></div>
<div class="t" style="left:544.9px;top:454px;font-size:14.3px;color:#000;font-weight:bold;transform:scaleX(0.889);transform-origin:left;">Purchase Information</div>
<div class="t" style="right:357px;top:473px;font-size:14.3px;color:#000;font-weight:bold;transform:scaleX(0.875);transform-origin:right;">Vehicle Source:</div>
<div class="combo" style="left:646px;top:472px;width:120px;height:19px"></div>
<div class="cbtn" style="left:747px;top:472px;width:19px;height:19px"><svg width="19" height="19" style="position:absolute;left:-2px;top:-2px"><path d="M4.7 8.5 L9.3 13.1 L13.9 8.5" stroke="#404040" stroke-width="1.3" fill="none"/></svg></div>
<div class="t" style="left:651px;top:473px;font-size:14.3px;color:#000;font-weight:bold;transform:scaleX(0.872);transform-origin:left;">Auction</div>
<div class="t" style="right:370.5px;top:494px;font-size:14.3px;color:#000;font-weight:bold;transform:scaleX(0.883);transform-origin:right;">Vendor:</div>
<div class="inp" style="left:631px;top:494px;width:148px;height:18px;border-color:#7A7A7A;background:#FCF7DC;box-shadow:inset 0 0 0 1px #FFF;"></div>
<div class="t" style="left:636.4px;top:497px;font-size:14.3px;color:#000;font-weight:bold;transform:scaleX(0.833);transform-origin:left;">FIRST CHOICE</div>
<div class="btn" style="left:787px;top:495px;width:16px;height:14px;"></div>
<svg class="b" style="left:787px;top:495px" width="19" height="17" viewBox="787 495 19 17"><g fill="#1C2A58"><rect x="792.3" y="503.7" width="1.6" height="1.8"/><rect x="795.3" y="503.7" width="1.6" height="1.8"/><rect x="798.3" y="503.7" width="1.6" height="1.8"/></g></svg>
<div class="btn" style="left:810px;top:495px;width:16px;height:14px;"></div>
<div class="t" style="left:815.2px;top:497px;font-size:14px;color:#F00000;font-weight:bold;transform:scaleX(1.026);transform-origin:left;">x</div>
<div class="t" style="right:370.5px;top:517px;font-size:14.3px;color:#000;font-weight:bold;transform:scaleX(0.899);transform-origin:right;">Buyer:</div>
<div class="inp" style="left:631px;top:518px;width:148px;height:17px;border-color:#7A7A7A;background:#FCF7DC;box-shadow:inset 0 0 0 1px #FFF;"></div>
<div class="btn" style="left:787px;top:517px;width:16px;height:15px;"></div>
<svg class="b" style="left:787px;top:517px" width="19" height="18" viewBox="787 517 19 18"><g fill="#1C2A58"><rect x="792.3" y="526.2" width="1.6" height="1.8"/><rect x="795.3" y="526.2" width="1.6" height="1.8"/><rect x="798.3" y="526.2" width="1.6" height="1.8"/></g></svg>
<div class="t" style="right:372px;top:540px;font-size:14.3px;color:#000;font-weight:bold;transform:scaleX(0.877);transform-origin:right;">Notes:</div>
<div class="inp" style="left:631px;top:542px;width:182px;height:18px;border-color:#7A7A7A;background:#FDFCF8;box-shadow:inset 0 0 0 1px #FFF;"></div>
<div class="chk" style="left:543px;top:574px;width:12px;height:12px"></div>
<div class="t" style="left:562.8px;top:573px;font-size:14.3px;color:#000;font-weight:bold;transform:scaleX(0.907);transform-origin:left;">Draft?</div>
<div class="t" style="right:345.5px;top:572px;font-size:14.3px;color:#7A7A7A;font-weight:bold;transform:scaleX(0.927);transform-origin:right;">Draft #:</div>
<div class="inp" style="left:655px;top:571px;width:76px;height:17px;border-color:#D6D6D6;background:#FDFCF8;box-shadow:inset 0 0 0 1px #FFF;"></div>
<div class="t" style="right:383.5px;top:596px;font-size:14.3px;color:#7A7A7A;font-weight:bold;transform:scaleX(0.864);transform-origin:right;">Date Paid:</div>
<div class="inp" style="left:617px;top:595px;width:76px;height:17px;border-color:#D6D6D6;background:#FDFCF8;box-shadow:inset 0 0 0 1px #FFF;"></div>
<svg class="b" style="left:696px;top:596px" width="20" height="18" viewBox="0 0 20 18"><rect x="0" y="0.5" width="20" height="1" fill="#A29C92"/><rect x="1" y="2.7" width="18" height="1.6" fill="#8A8A8A"/><rect x="1" y="4.4" width="18" height="10" fill="#ABABAB"/><rect x="1.9" y="4.9" width="2.2" height="2.2" fill="#FFFFFF"/><rect x="1.9" y="8.2" width="2.2" height="2.2" fill="#FFFFFF"/><rect x="1.9" y="11.5" width="2.2" height="2.2" fill="#FFFFFF"/><rect x="5.3" y="4.9" width="2.2" height="2.2" fill="#FFFFFF"/><rect x="5.3" y="8.2" width="2.2" height="2.2" fill="#FFFFFF"/><rect x="5.3" y="11.5" width="2.2" height="2.2" fill="#FFFFFF"/><rect x="8.7" y="4.9" width="2.2" height="2.2" fill="#FFFFFF"/><rect x="8.7" y="8.2" width="2.2" height="2.2" fill="#FFFFFF"/><rect x="8.7" y="11.5" width="2.2" height="2.2" fill="#FFFFFF"/><rect x="12.1" y="4.9" width="2.2" height="2.2" fill="#FFFFFF"/><rect x="12.1" y="8.2" width="2.2" height="2.2" fill="#FFFFFF"/><rect x="12.1" y="11.5" width="2.2" height="2.2" fill="#FFFFFF"/><rect x="15.5" y="4.9" width="2.2" height="2.2" fill="#FFFFFF"/><rect x="15.5" y="8.2" width="2.2" height="2.2" fill="#FFFFFF"/><rect x="15.5" y="11.5" width="2.2" height="2.2" fill="#FFFFFF"/><ellipse cx="13" cy="9.3" rx="4" ry="2.9" fill="none" stroke="#707070" stroke-width="1.5"/><rect x="0" y="15.8" width="20" height="1.1" fill="#7A7A7A"/></svg>
<div class="btn" style="left:741px;top:564px;width:90px;height:45px;"></div>
<div class="t" style="left:785px;top:572px;font-size:14.3px;color:#800080;font-weight:bold;transform:scaleX(0.896);transform-origin:left;">Bill of</div>
<div class="t" style="left:785px;top:589px;font-size:14.3px;color:#800080;font-weight:bold;transform:scaleX(0.884);transform-origin:left;">Sale</div>
<svg class="b" style="left:753px;top:579px" width="21" height="19" viewBox="0 0 21 19">
<defs><linearGradient id="pp" x1="0" y1="0" x2="0" y2="1"><stop offset="0" stop-color="#FFFFFF"/><stop offset="0.45" stop-color="#E8F0F8"/><stop offset="0.5" stop-color="#7AB8E0"/><stop offset="1" stop-color="#3A8AC8"/></linearGradient></defs>
<rect x="5.5" y="1.5" width="9" height="9" rx="0.8" fill="url(#pp)" stroke="#8A8A8A" stroke-width="0.9"/>
<path d="M1.5 14.5 V10.5 Q1.5 8.5 3.5 8.5 H5.5 V10.5 H14.5 V8.5 H17 Q19 8.5 19 10.5 V14.5 Z" fill="#F4F4F4" stroke="#9A9A9A" stroke-width="0.9"/>
<path d="M3 14.5 L4.5 17.5 H16 L17.5 14.5" fill="#FFFFFF" stroke="#6A6A6A" stroke-width="1"/>
<path d="M2 14.5 H18.5" stroke="#5A5A5A" stroke-width="1"/>
</svg>
<div class="b" style="left:884px;top:60px;width:79px;height:40px;background:#DEDEDE;border:1px solid #9C9C9C;overflow:hidden"></div>
<svg class="b" style="left:884px;top:60px" width="81" height="42" viewBox="884 60 81 42">
<path d="M894.5 60 H911 V101 L902.7 93 L894.5 101 Z" fill="#1A40C8"/>
<path d="M896 60 V100 M909.5 60 V100" stroke="#3A5AD8" stroke-width="0.8"/>
<polygon points="917.0,79.0 914.9,80.6 916.5,82.8 914.0,83.8 915.1,86.2 912.4,86.6 912.8,89.3 910.1,88.9 909.8,91.6 907.3,90.5 906.3,93.0 904.1,91.4 902.5,93.5 900.9,91.4 898.7,93.0 897.7,90.5 895.2,91.6 894.9,88.9 892.2,89.3 892.6,86.6 889.9,86.2 891.0,83.8 888.5,82.8 890.1,80.6 888.0,79.0 890.1,77.4 888.5,75.2 891.0,74.2 889.9,71.8 892.6,71.4 892.2,68.7 894.9,69.1 895.2,66.4 897.7,67.5 898.7,65.0 900.9,66.6 902.5,64.5 904.1,66.6 906.3,65.0 907.3,67.5 909.8,66.4 910.1,69.1 912.8,68.7 912.4,71.4 915.1,71.8 914.0,74.2 916.5,75.2 914.9,77.4" fill="#E8C020"/>
<circle cx="902.5" cy="79" r="11.5" fill="#1636B0"/>
<circle cx="902.5" cy="79" r="9" fill="none" stroke="#2A56D8" stroke-width="1"/>
<text x="902.5" y="81" font-size="5.2" font-family="Liberation Sans" font-weight="bold" fill="#E8D050" text-anchor="middle" textLength="19" lengthAdjust="spacingAndGlyphs">BLUE BOOK</text>
<text x="902.5" y="72.5" font-size="3.5" font-family="Liberation Sans" font-weight="bold" fill="#E8D050" text-anchor="middle">KELLEY</text>
<text x="920.5" y="72.6" font-size="5" font-family="Liberation Sans" font-weight="bold" fill="#1A3AC8" textLength="41.5" lengthAdjust="spacingAndGlyphs">Kelley Blue Book</text>
<text x="920.5" y="81.2" font-size="9.2" font-family="Liberation Sans" font-weight="bold" fill="#1A3AC8" textLength="41.5" lengthAdjust="spacingAndGlyphs">KBB.COM</text>
<text x="921" y="85.8" font-size="4.2" font-family="Liberation Sans" font-weight="bold" fill="#1A3AC8" textLength="41" lengthAdjust="spacingAndGlyphs">The Trusted Resource</text>
</svg>
<div class="b" style="left:884px;top:110px;width:79px;height:40px;background:#DEDEDE;border:1px solid #9C9C9C;overflow:hidden"></div>
<svg class="b" style="left:884px;top:110px" width="81" height="42" viewBox="884 110 81 42">
<ellipse cx="923.8" cy="133.8" rx="31.5" ry="16.8" fill="#142A6A"/>
<ellipse cx="923.8" cy="133.8" rx="28.5" ry="14" fill="none" stroke="#E8B030" stroke-width="1.5"/>
<rect x="895" y="127.5" width="58" height="2.6" fill="#E8B030"/>
<rect x="895" y="132.8" width="58" height="2.4" fill="#C8A040"/>
<rect x="905.5" y="110.5" width="36.5" height="39.5" rx="2" fill="#142A6A"/>
<rect x="907.5" y="112.5" width="32.5" height="22.5" fill="#F0B432"/>
<rect x="907.5" y="140" width="32.5" height="8.5" fill="#F0B432"/>
<rect x="907.5" y="136.8" width="32.5" height="1.2" fill="#E8B030"/>
<text x="923.8" y="128.8" font-size="12" font-family="Liberation Sans" font-weight="bold" fill="#142A6A" text-anchor="middle" textLength="25" lengthAdjust="spacingAndGlyphs">NADA</text>
<text x="923.8" y="146.5" font-size="3.8" font-family="Liberation Sans" font-weight="bold" fill="#142A6A" text-anchor="middle">Blue Mail</text>
</svg>
<div class="b" style="left:872px;top:184px;width:102px;height:26px;background:#DEDEDE;border:1px solid #9C9C9C;overflow:hidden"></div>
<svg class="b" style="left:872px;top:184px" width="104" height="28" viewBox="872 184 104 28">
<path d="M903 188 Q915 185 930 187 Q945 186 946 192 L944 200 Q938 206 930 204 Q922 208 918 205 Q908 204 903 198 Z" fill="#BCD4EC"/>
<path d="M894 204 Q888 198 898 195 Q905 193 912 194" stroke="#E0C070" stroke-width="2" fill="none"/>
<path d="M898 205 Q902 201 908 203 L911 207 Q905 210 899 208 Z" fill="#D8E0EC" stroke="#8090A8" stroke-width="0.6"/>
<text x="922.5" y="199.6" font-size="13.5" font-family="Liberation Sans" font-weight="bold" fill="#173A6A" text-anchor="middle" textLength="52" lengthAdjust="spacingAndGlyphs">NMVTIS</text>
<rect x="913" y="202" width="34" height="1.6" fill="#E0C880"/><rect x="927" y="205" width="20" height="1.6" fill="#E0C880"/>
</svg>
<div class="b" style="left:872px;top:240px;width:102px;height:26px;background:#DEDEDE;border:1px solid #9C9C9C;overflow:hidden"></div>
<svg class="b" style="left:872px;top:240px" width="104" height="28" viewBox="872 240 104 28">
<path d="M876.5 254.5 L880.5 252.5 L884 259 L896 241.5 L899.5 241.5 L884.5 264.5 L881.5 264.5 Z" fill="#2A4A98"/>
<text x="891.5" y="259.5" font-size="14.5" font-family="Liberation Sans" font-weight="bold" font-style="italic" fill="#2A4A98" textLength="79.5" lengthAdjust="spacingAndGlyphs">AutoCheck</text>
</svg>
<div class="b" style="left:872px;top:296px;width:102px;height:27px;background:#DEDEDE;border:1px solid #9C9C9C;overflow:hidden"></div>
<svg class="b" style="left:872px;top:296px" width="104" height="29" viewBox="872 296 104 29">
<rect x="876" y="300" width="93" height="17.5" rx="1" fill="#1C1C18"/>
<text x="884.5" y="314.8" font-size="14" font-family="Liberation Sans" font-weight="bold" fill="#EDEDC8" text-anchor="middle">C</text><path d="M891.6 301 V316" stroke="#5A5A50" stroke-width="0.7"/><text x="899.5" y="314.8" font-size="14" font-family="Liberation Sans" font-weight="bold" fill="#EDEDC8" text-anchor="middle">A</text><path d="M906.6 301 V316" stroke="#5A5A50" stroke-width="0.7"/><text x="914.5" y="314.8" font-size="14" font-family="Liberation Sans" font-weight="bold" fill="#EDEDC8" text-anchor="middle">R</text><path d="M921.6 301 V316" stroke="#5A5A50" stroke-width="0.7"/><text x="929.5" y="314.8" font-size="14" font-family="Liberation Sans" font-weight="bold" fill="#EDEDC8" text-anchor="middle">F</text><path d="M936.6 301 V316" stroke="#5A5A50" stroke-width="0.7"/><text x="944.5" y="314.8" font-size="14" font-family="Liberation Sans" font-weight="bold" fill="#EDEDC8" text-anchor="middle">A</text><path d="M951.6 301 V316" stroke="#5A5A50" stroke-width="0.7"/><rect x="952.5" y="301" width="15.5" height="15.5" fill="#E8E8C0"/><text x="960.5" y="315" font-size="15" font-family="Liberation Sans" font-weight="bold" fill="#1A1A1A" text-anchor="middle">x</text>
<text x="922.7" y="322.6" font-size="4.4" font-family="Liberation Sans" font-weight="bold" fill="#2A2A2A" text-anchor="middle" textLength="84" lengthAdjust="spacingAndGlyphs">VEHICLE HISTORY REPORTS</text>
</svg>
<svg class="b" style="left:865px;top:393px" width="122" height="32" viewBox="865 393 122 32">
<rect x="865" y="393" width="122" height="32" fill="#000"/>
<g fill="none" stroke="#1FA0EA" stroke-width="1.4">
<path d="M877 398 Q869 409 877 420"/><path d="M881 400.5 Q875 409 881 417.5"/><path d="M884.5 403 Q880.5 409 884.5 415"/>
<path d="M975 398 Q983 409 975 420"/><path d="M971 400.5 Q977 409 971 417.5"/><path d="M967.5 403 Q971.5 409 967.5 415"/></g>
<text x="885.5" y="413.6" font-size="16" font-family="Liberation Sans" font-weight="bold" fill="#fff" textLength="81" lengthAdjust="spacingAndGlyphs">SiriusXM</text>
<text x="897" y="421.4" font-size="4.6" font-family="Liberation Sans" font-weight="bold" fill="#fff" textLength="57" lengthAdjust="spacingAndGlyphs">SATELLITE RADIO</text>
</svg>
<div class="btn" style="left:878px;top:445px;width:92px;height:65px;"></div>
<div class="t" style="left:893.8px;top:462px;font-size:15px;color:#800080;font-weight:bold;transform:scaleX(0.922);transform-origin:left;">Check for</div>
<div class="t" style="left:902.8px;top:480px;font-size:15px;color:#800080;font-weight:bold;transform:scaleX(0.866);transform-origin:left;">Recalls</div>
<div class="btn" style="left:878px;top:516px;width:92px;height:64px;"></div>
<div class="t" style="left:890.3px;top:531px;font-size:16.8px;color:#0E7A0E;font-weight:bold;transform:scaleX(1.014);transform-origin:left;">Sell This</div>
<div class="t" style="left:894.8px;top:554px;font-size:16.8px;color:#0E7A0E;font-weight:bold;transform:scaleX(1.061);transform-origin:left;">Vehicle</div>
<div class="btn" style="left:11px;top:650px;width:77px;height:22px;"></div>
<div class="t" style="left:40.4px;top:654px;font-size:14.3px;color:#000;font-weight:bold;transform:scaleX(0.919);transform-origin:left;"><u>H</u>elp</div>
<svg class="b" style="left:14px;top:653px" width="20" height="18" viewBox="0 0 20 18">
<path d="M1 11.5 L9 1.5 L18.5 4.5 L11 13.5 Z" fill="#8C0F8C"/>
<path d="M1 11.5 Q0 14.5 2.5 15.5 L9.5 17.5 Q10.5 15.5 11 13.5" fill="#fff" stroke="#8C0F8C" stroke-width="1.6"/>
<path d="M11 13.5 L18.5 4.5 V7.5 L11.5 16.5" fill="#8C0F8C"/>
<path d="M9.5 4.5 L15 6" stroke="#E8C8E8" stroke-width="1.2"/>
</svg>
<div class="btn" style="left:334px;top:639px;width:142px;height:35px;"></div>
<div class="t" style="left:374.7px;top:650px;font-size:15.5px;color:#000;font-weight:bold;transform:scaleX(0.894);transform-origin:left;"><u>S</u>ave Vehicle</div>
<svg class="b" style="left:334px;top:639px" width="40" height="37" viewBox="334 639 40 37">
<defs><linearGradient id="ck" x1="0" y1="0" x2="1" y2="1"><stop offset="0" stop-color="#8AE070"/><stop offset="1" stop-color="#48C038"/></linearGradient></defs>
<path d="M340.5 659.5 L351.5 670.5 L368 645" fill="none" stroke="#4CC23A" stroke-width="5.2" stroke-linecap="round" stroke-linejoin="round"/>
<path d="M340.5 659.5 L351.5 670.5 L368 645" fill="none" stroke="url(#ck)" stroke-width="2.6" stroke-linecap="round" stroke-linejoin="round"/>
</svg>
<div class="btn" style="left:490px;top:639px;width:179px;height:35px;"></div>
<div class="t" style="left:531.3px;top:650px;font-size:15.5px;color:#000;font-weight:bold;transform:scaleX(0.923);transform-origin:left;"><u>E</u>xit - Do not save</div>
<svg class="b" style="left:490px;top:639px" width="40" height="37" viewBox="490 639 40 37">
<path d="M500.8 647 L521 667.5 M521 647 L500.8 667.5" stroke="#D85054" stroke-width="8.2" stroke-linecap="round"/>
<path d="M500.8 647 L521 667.5 M521 647 L500.8 667.5" stroke="#F07478" stroke-width="3.5" stroke-linecap="round" opacity="0.7"/>
</svg>
<div class="t" style="left:377.6px;top:689px;font-size:15px;color:#08087E;font-weight:bold;transform:scaleX(0.888);transform-origin:left;">0005: RED 03 MITSUBISHI ECLIPSE GS</div>
<div class="b" style="left:0px;top:714px;width:1000px;height:3px;background:#D4D4D4;border:none;"></div>
<div class="b" style="left:313px;top:714px;width:1px;height:3px;background:#888;border:none;"></div>
<div class="b" style="left:702px;top:714px;width:1px;height:3px;background:#888;border:none;"></div>
<div class="b" style="left:940px;top:714px;width:1px;height:3px;background:#888;border:none;"></div>
<div class="t" style="left:4px;top:715px;font-size:12.5px;color:#222">the C:\\Winteg\\Frazer TRC</div>
<div class="t" style="left:317px;top:715px;font-size:12.5px;color:#222">25,057, FRAZER COMPUTING</div>
<div class="t" style="left:705px;top:715px;font-size:12.5px;color:#222">Wednesday, November 22, 2017</div>
<div class="t" style="left:944px;top:715px;font-size:12.5px;color:#222">12:13PM</div>
<div class="b" style="left:0px;top:705px;width:4px;height:1px;background:#8E8E8E;border:none;"></div>
<div class="b" style="left:0px;top:706px;width:4px;height:8px;background:#DEDEDE;border:none;"></div>
</body></html>
